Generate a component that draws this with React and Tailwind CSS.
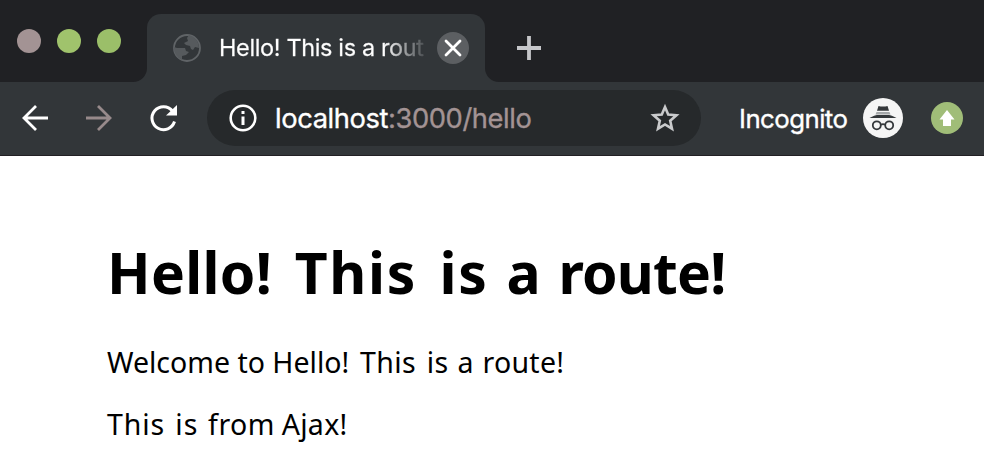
function TabStrip() {
  return (
    <div className="flex h-[82px] bg-[#202124] pt-[14px]">
      <div className="flex w-[147px] gap-4 pt-[15px] pl-[17px]">
        <span className="size-6 rounded-full bg-[#a39394]" />
        <span className="size-6 rounded-full bg-[#a0c36c]" />
        <span className="size-6 rounded-full bg-[#9bbf69]" />
      </div>
      <div className="relative flex h-[68px] w-[338px] items-center rounded-t-[14px] bg-[#323639] pl-[25px]">
        <svg className="absolute bottom-0 -left-[14px]" width="14" height="14">
          <path d="M14 0V14H0A14 14 0 0 0 14 0Z" fill="#323639" />
        </svg>
        <svg className="absolute -right-[14px] bottom-0" width="14" height="14">
          <path d="M0 0V14H14A14 14 0 0 1 0 0Z" fill="#323639" />
        </svg>
        <svg width="30" height="30" viewBox="0 0 30 30" fill="#565a5d">
          <circle cx="15" cy="15" r="13" fill="none" stroke="#606467" strokeWidth="1.8" />
          <path d="M17 2 15 5l1 3-4 2 2 2 4 1 1 3 2 1 2-3 4 1A13 13 0 0 0 17 2Z" />
          <path d="M2 14l3 1h8l1 3 3 1-3 3-4 1v4A13 13 0 0 1 2 14Z" />
        </svg>
        <div className="ml-[17px] w-[206px] overflow-hidden bg-linear-to-r from-white from-80% to-[#4a4e51] bg-clip-text font-['Inter','Liberation_Sans',sans-serif] text-[23.5px] leading-8 tracking-[-0.37px] whitespace-nowrap text-transparent [-webkit-text-stroke:0.3px_transparent]">
          Hello! This is a rout
        </div>
        <div className="ml-3 flex size-8 items-center justify-center rounded-full bg-[#5c5f62]">
          <svg width="18" height="18" stroke="white" strokeWidth="2.8" strokeLinecap="round">
            <path d="M2 2 16 16M16 2 2 16" />
          </svg>
        </div>
      </div>
      <svg className="mt-[22px] ml-8" width="24" height="24" stroke="#c6c7ca" strokeWidth="3.8">
        <path d="M12 0V24M0 12H24" />
      </svg>
    </div>
  );
}

function Toolbar() {
  return (
    <div className="flex h-[74px] items-center border-b border-[#222024] bg-[#323639] pb-px font-['Inter','Liberation_Sans',sans-serif]">
      <svg className="ml-[21px]" width="28" height="28" fill="none" stroke="white" strokeWidth="2.8">
        <path d="M27 14H3M15 2 3 14 15 26" />
      </svg>
      <svg className="ml-[36px]" width="28" height="28" fill="none" stroke="#978a8b" strokeWidth="2.8">
        <path d="M1 14H25M13 2 25 14 13 26" />
      </svg>
      <svg className="ml-[36px]" width="30" height="30" fill="none" stroke="white" strokeWidth="3">
        <path d="M23.5 8A11.5 11.5 0 1 0 25.5 18.5" />
        <path d="M28 2V12.5H17Z" fill="white" stroke="none" />
      </svg>
      <div className="ml-[28px] flex h-14 w-[494px] items-center rounded-full bg-[#26292b] pr-[21px] pl-[22px]">
        <svg width="28" height="28" fill="none" stroke="white" strokeWidth="2.6">
          <circle cx="14" cy="14" r="12.3" />
          <path d="M14 7V10M14 12.5V21" strokeWidth="3" />
        </svg>
        <div className="mt-0.5 ml-[18px] text-[27.3px] leading-8 tracking-[-0.4px] text-[#a39394] [-webkit-text-stroke:0.35px_currentColor]">
          <span className="text-white">localhost</span>:3000/hello
        </div>
        <svg className="ml-auto" width="30" height="30" fill="none" stroke="#c9cacc" strokeWidth="2.6">
          <path d="M15 4 18.2 11.6 26.4 12.3 20.2 17.7 22 25.7 15 21.5 8 25.7 9.8 17.7 3.6 12.3 11.8 11.6Z" />
        </svg>
      </div>
      <div className="mt-0.5 ml-[38px] w-[108px] text-[25.8px] leading-8 tracking-[-0.55px] whitespace-nowrap text-white [-webkit-text-stroke:0.35px_currentColor]">
        Incognito
      </div>
      <svg className="ml-4" width="40" height="40" fill="none">
        <circle cx="20" cy="20" r="20" fill="#f5f5f5" />
        <path d="M15.5 8Q17.5 8.6 20 8.6T24.5 8L26 12.8H14Z" fill="#34383b" />
        <path d="M13.5 14H26.5L27.5 16.5H12.5Z" fill="#a5a8aa" />
        <path d="M6.5 20Q12 17 14 17H26Q28 17 33.5 20Z" fill="#34383b" />
        <g stroke="#34383b" strokeWidth="1.8">
          <circle cx="13.8" cy="27.3" r="4" />
          <circle cx="26.2" cy="27.3" r="4" />
          <path d="M18 26.8Q20 25.5 22 26.8" />
        </g>
      </svg>
      <svg className="ml-[28px]" width="32" height="32">
        <circle cx="16" cy="16" r="16" fill="#a0bd78" />
        <path d="M16 8 23.5 17.5H20V24H12V17.5H8.5Z" fill="white" />
      </svg>
    </div>
  );
}

export default function App() {
  return (
    <div className="flex h-[461px] w-[984px] flex-col overflow-hidden bg-white">
      <TabStrip />
      <Toolbar />
      <main className="pl-[107px] font-['Noto_Sans','Open_Sans',sans-serif] whitespace-nowrap text-black">
        <h1 className="mt-[76px] text-[57px] leading-[80px] font-bold [word-spacing:3px]">
          <span className="tracking-[0.3px]">Hello!</span>
          <span className="tracking-[1.7px] [word-spacing:6px]"> This is</span> a{" "}
          <span className="tracking-[-0.8px]">route!</span>
        </h1>
        <p className="mt-[30px] text-[28.5px] leading-[40px]">
          Welcome to Hello!
          <span className="tracking-[0.4px] [word-spacing:3px]"> This is</span>
          <span className="tracking-[0.3px] [word-spacing:1px]"> a route!</span>
        </p>
        <p className="mt-[22px] text-[28.5px] leading-[40px] tracking-[0.5px] [word-spacing:2px]">
          <span className="tracking-[0.9px]">This is</span> from
          <span className="tracking-[0.3px] [word-spacing:-1px]"> Ajax!</span>
        </p>
      </main>
    </div>
  );
}
